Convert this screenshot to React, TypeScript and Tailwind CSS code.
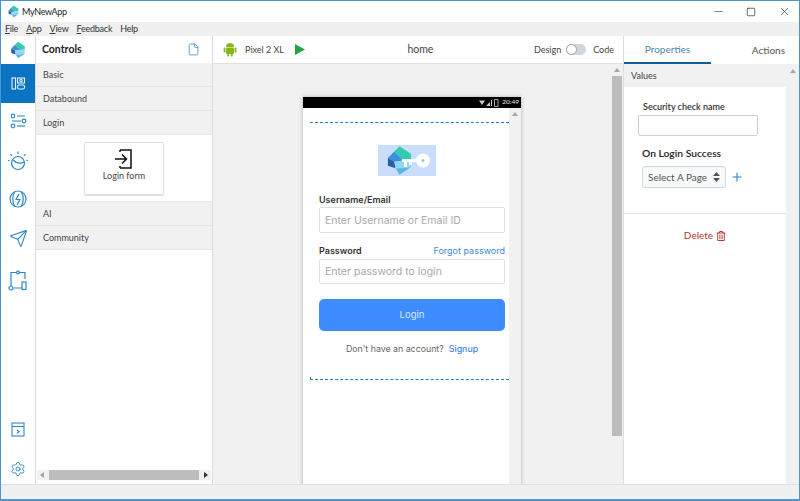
import { File, Minus, Plus, Send, Settings, Square, X } from "lucide-react";
import { FaRegTrashAlt } from "react-icons/fa";

const Logo = ({ size }: { size: number }) => (
  <svg width={size} height={size} viewBox="0 0 24 24">
    <polygon points="12,1 21,7 21,11 15,12 8,5" fill="#35c9b0" />
    <polygon points="8,5 15,12 8,13 3,10" fill="#3a8fe0" />
    <polygon points="3,10 8,13 9,18 3,16" fill="#2a5fa8" />
    <polygon points="8,13 15,12 21,11 21,17 14,18 9,18" fill="#8fd8f0" />
    <polygon points="9,18 14,18 21,17 12,23" fill="#5cb4ec" />
  </svg>
);

const RailIcon = ({ children }: { children: React.ReactNode }) => (
  <svg width="22" height="22" viewBox="0 0 22 22" fill="none" stroke="#2f86c6" strokeWidth="1.2">
    {children}
  </svg>
);

const AccordionRow = ({ label }: { label: string }) => (
  <div className="h-6 pt-[1px] flex items-center pl-[7px] bg-[#f1f1f1] border-b border-[#e6e6e6] text-[9px] text-[#444]">
    {label}
  </div>
);

const ArrowButton = ({ dir }: { dir: "up" | "left" | "right" }) => (
  <span
    className={
      dir === "up"
        ? "block w-0 h-0 border-x-[3px] border-x-transparent border-b-[4px] border-b-[#a6a6a6]"
        : dir === "left"
          ? "block w-0 h-0 border-y-[3px] border-y-transparent border-r-[4px] border-r-[#a6a6a6]"
          : "block w-0 h-0 border-y-[3px] border-y-transparent border-l-[4px] border-l-[#333]"
    }
  />
);

const AndroidIcon = () => (
  <svg width="14" height="15" viewBox="0 0 14 15" fill="#8bb51d">
    <path d="M3 5a4 4 0 0 1 8 0z" />
    <rect x="3" y="5.6" width="8" height="6.4" rx="1" />
    <rect x="0.6" y="5.6" width="1.8" height="5" rx="0.9" />
    <rect x="11.6" y="5.6" width="1.8" height="5" rx="0.9" />
    <rect x="4.4" y="11" width="1.8" height="3.6" rx="0.9" />
    <rect x="7.8" y="11" width="1.8" height="3.6" rx="0.9" />
  </svg>
);

const Rail = () => (
  <div className="w-[35px] shrink-0 bg-white border-r border-[#dcdcdc] flex flex-col items-center">
    <div className="h-7 w-full flex items-center justify-center">
      <Logo size={18} />
    </div>
    <div className="h-[39px] w-full bg-[#0a74c2] flex items-center justify-center">
      <svg width="15" height="15" viewBox="0 0 15 15" fill="none" stroke="#ffffff" strokeWidth="1.1" opacity="0.9">
        <rect x="1" y="2" width="3.5" height="11" />
        <rect x="6.5" y="2" width="7" height="5" />
        <circle cx="10" cy="4.5" r="1.2" />
        <rect x="6.5" y="9" width="7" height="4" rx="1.5" />
      </svg>
    </div>
    <div className="mt-[7px] flex flex-col items-center">
      <RailIcon>
        <circle cx="6" cy="6" r="1.8" />
        <path d="M10 6h8M5 11h9" />
        <circle cx="17" cy="11" r="1.8" />
        <circle cx="6" cy="16" r="1.8" />
        <path d="M10 16h8" />
      </RailIcon>
      <div className="mt-[18px]">
        <RailIcon>
          <circle cx="11" cy="13" r="6.5" />
          <path d="M6 10c3 3 7 4 11 2M11 4V1.5M5 6 3.5 4M17 6l1.5-2M2.5 10.5H1M19.5 10.5H21" />
        </RailIcon>
      </div>
      <div className="mt-[16px]">
        <RailIcon>
          <circle cx="11" cy="11" r="8" />
          <path d="M8 3.5c-3 4-3 11 0 15M14 3.5c3 4 3 11 0 15M12 6l-3 5.5h4L10 17" />
        </RailIcon>
      </div>
      <Send className="mt-[19px]" size={19} color="#2f86c6" strokeWidth={1.4} />
      <div className="mt-[21px]">
        <RailIcon>
          <path d="M4 11V3.5h14V10M7 19h8" />
          <circle cx="11" cy="3.5" r="1.4" fill="#fff" />
          <circle cx="4" cy="19" r="2" />
          <rect x="15" y="13" width="4" height="7.5" />
          <path d="M4 11v6" />
        </RailIcon>
      </div>
    </div>
    <div className="mt-auto flex flex-col items-center">
      <svg width="14" height="15" viewBox="0 0 14 15" fill="none" stroke="#2f86c6" strokeWidth="1.1">
        <rect x="1" y="1" width="12" height="13" />
        <path d="M1 4.5h12M6 8l2 1.8L6 11.5" />
      </svg>
      <div className="mt-[24px] mb-[7px]">
        <Settings size={16} color="#2f86c6" strokeWidth={1.4} />
      </div>
    </div>
  </div>
);

const ControlsPanel = () => (
  <div className="w-[177px] shrink-0 bg-white border-r border-[#dcdcdc] flex flex-col">
    <div className="h-[27px] flex items-center justify-between pl-[6px] pr-[12px]">
      <span className="text-[10.5px] font-bold text-[#222]">Controls</span>
      <File size={13} color="#2f86c6" strokeWidth={1.4} />
    </div>
    <AccordionRow label="Basic" />
    <AccordionRow label="Databound" />
    <AccordionRow label="Login" />
    <div className="h-[67px] flex justify-center pt-[7px] border-b border-[#e6e6e6]">
      <div className="w-[80px] h-[53px] border border-[#dedede] rounded-[2px] shadow-[0_1px_1px_#ddd] flex flex-col items-center pt-[6px]">
        <svg width="18" height="20" viewBox="0 0 18 20" fill="none" stroke="#111" strokeWidth="1.5">
          <path d="M5 1h11v18H5M5 1v2M5 19v-2M0 10h11M7 5.5 11.5 10 7 14.5" />
        </svg>
        <span className="text-[9px] text-[#444]">Login form</span>
      </div>
    </div>
    <AccordionRow label="AI" />
    <AccordionRow label="Community" />
    <div className="mt-auto mb-[4px] h-[10px] mx-[1px] bg-[#f1f1f1] flex items-center justify-between px-[3px]">
      <ArrowButton dir="left" />
      <div className="h-full w-[150px] bg-[#bdbdbd]" />
      <ArrowButton dir="right" />
    </div>
  </div>
);

const Toolbar = () => (
  <div className="h-7 shrink-0 bg-white border-b border-[#e0e0e0] flex items-center pl-[10px] pr-[9px] text-[#444]">
    <AndroidIcon />
    <span className="ml-[8px] text-[9px]">Pixel 2 XL</span>
    <svg className="ml-[11px]" width="10" height="11" viewBox="0 0 10 11">
      <polygon points="0,0 10,5.5 0,11" fill="#27a146" />
    </svg>
    <span className="flex-1 text-center text-[10.5px] pl-[62px]">home</span>
    <span className="ml-[60px] text-[9px]">Design</span>
    <div className="mx-[5px] w-5 h-[11px] rounded-full bg-[#cfd6dc] relative">
      <span className="absolute left-0 top-0 w-[11px] h-[11px] rounded-full bg-white border border-[#9aa3aa]" />
    </div>
    <span className="ml-[2px] text-[9px]">Code</span>
  </div>
);

const StatusBar = () => (
  <div className="h-[11px] bg-black flex items-center justify-end pr-[2px] gap-[3px]">
    <svg width="20" height="8" viewBox="0 0 20 8" fill="#cccccc">
      <path d="M0 1.5h6L3 6z" />
      <path d="M7 7 11 3v4zM12 1h1v6h-1z" />
      <path d="M15.5 0.5h3.5v7h-3.5z" fill="none" stroke="#cccccc" strokeWidth="0.8" />
    </svg>
    <span className="text-[6.5px] font-semibold text-[#dddddd] leading-none">20:49</span>
  </div>
);

const PhoneForm = () => (
  <div
    className="flex-1 min-w-0 pl-[7px] flex flex-col"
    style={{ fontFamily: "Inter, sans-serif" }}
  >
    <div className="mt-[14px] border-t border-dashed border-[#1e7fc0]" />
    <div className="mt-[22px] ml-[68px] w-[58px] h-[31px] bg-[#c9defc] relative">
      <div className="absolute left-[6px] top-0">
        <Logo size={31} />
      </div>
      <svg className="absolute left-[24px] top-[8px]" width="30" height="16" viewBox="0 0 30 16" fill="#ffffff">
        <circle cx="21" cy="7.5" r="7" />
        <rect x="0" y="6" width="16" height="3" />
        <rect x="2" y="7" width="3" height="7" />
        <rect x="7" y="7" width="3" height="5" />
        <circle cx="21" cy="7.5" r="1.5" fill="#9dc0ee" />
      </svg>
    </div>
    <div className="pl-[9px] pr-[4px] flex flex-col">
      <span className="mt-[17px] text-[9px] font-semibold text-[#333] leading-[14px]">Username/Email</span>
      <div className="h-[26px] pt-[1px] border border-[#dcdfe3] rounded-[2px] flex items-center pl-[5px] text-[10.5px] text-[#a9a9a9]">
        Enter Username or Email ID
      </div>
      <div className="mt-[11px] flex items-center justify-between leading-[14px]">
        <span className="text-[9px] font-semibold text-[#333]">Password</span>
        <span className="text-[9px] text-[#4488e0]">Forgot password</span>
      </div>
      <div className="mt-[1px] h-[25px] pt-[1px] border border-[#dcdfe3] rounded-[2px] flex items-center pl-[5px] text-[10.5px] text-[#a9a9a9]">
        Enter password to login
      </div>
      <div className="mt-[15px] h-[32px] bg-[#3f8cff] rounded-[5px] flex items-center justify-center text-[9.5px] text-[#dbe9ff]">
        Login
      </div>
      <div className="mt-[11px] text-center text-[8.8px] leading-[14px] text-[#666]">
        Don't have an account?<span className="ml-[5px] font-medium text-[#4488e0]">Signup</span>
      </div>
    </div>
    <div className="mt-[23px] relative border-t border-dashed border-[#1e7fc0]">
      <span className="absolute left-0 top-[-3px] h-[3px] border-l border-[#1e7fc0]" />
    </div>
  </div>
);

const Canvas = () => (
  <div className="flex-1 min-h-0 bg-[#f1f1f1] flex">
    <div className="flex-1 min-w-0 pt-[33px] pl-[90px] overflow-hidden flex">
      <div className="w-[218px] h-[600px] bg-white shadow-[0_0_4px_#aaa] flex flex-col">
        <StatusBar />
        <div className="flex flex-1">
          <PhoneForm />
          <div className="w-[12px] bg-[#f1f1f1] flex justify-center pt-[4px]">
            <div>
              <ArrowButton dir="up" />
            </div>
          </div>
        </div>
      </div>
    </div>
    <div className="w-[11px] mr-[1px] bg-[#f1f1f1] flex flex-col items-center pt-[4px]">
      <ArrowButton dir="up" />
      <div className="mt-[4px] w-[10px] h-[360px] bg-[#bdbdbd]" />
    </div>
  </div>
);

const PropertiesPanel = () => (
  <div className="w-[176px] shrink-0 bg-white border-l border-[#dcdcdc] flex flex-col">
    <div className="h-7 shrink-0 flex items-stretch text-[10px]">
      <div className="w-[87px] pt-[1px] flex items-center justify-center text-[#4d87b5] border-b-2 border-[#0f5c97]">
        Properties
      </div>
      <div className="flex-1 pt-[1px] flex items-center justify-end pr-[14px] text-[#555]">Actions</div>
    </div>
    <div className="flex flex-1 min-h-0">
      <div className="flex-1 min-w-0 flex flex-col">
        <div className="h-[23px] bg-[#f1f1f1] flex items-center pl-[7px] text-[9px] text-[#444]">Values</div>
        <div className="pt-[13px] h-[127px] border-b border-[#e3e3e3] flex flex-col">
          <span className="ml-[19px] text-[9px] font-semibold text-[#333] leading-[14px]">Security check name</span>
          <div className="ml-[14px] mt-[1px] w-[120px] h-[21px] border border-[#cfcfcf] rounded-[2px]" />
          <span className="ml-[18px] mt-[10px] text-[10.3px] font-semibold text-[#222] leading-[14px]">On Login Success</span>
          <div className="ml-[18px] mt-[6px] flex items-center">
            <div className="w-[84px] h-[22px] bg-[#f8f9fa] border border-[#ced4da] rounded-[3px] flex items-center pl-[5px] text-[10px] text-[#555]">
              Select A Page
              <svg className="ml-[6px]" width="7" height="10" viewBox="0 0 7 10" fill="#555">
                <polygon points="3.5,0 7,4 0,4" />
                <polygon points="0,6 7,6 3.5,10" />
              </svg>
            </div>
            <Plus className="ml-[4px]" size={14} color="#2583c9" strokeWidth={1.8} />
          </div>
        </div>
        <div className="mt-[14px] flex items-center justify-center text-[10px] text-[#b53535]">
          Delete
          <FaRegTrashAlt className="ml-[3px]" size={10} />
        </div>
      </div>
      <div className="w-[13px] bg-[#f1f1f1] flex justify-center pt-[5px]">
        <div>
          <ArrowButton dir="up" />
        </div>
      </div>
    </div>
  </div>
);

export default function App() {
  return (
    <div
      className="w-[800px] h-[501px] flex flex-col overflow-hidden bg-white border-x border-t border-[#4a95cf] border-b-2"
      style={{ fontFamily: 'Lato, "Open Sans", sans-serif' }}
    >
      <div className="h-[21px] shrink-0 flex items-center pl-[6px]">
        <Logo size={13} />
        <span className="ml-[2px] text-[9px] tracking-[-0.3px] text-[#222]">MyNewApp</span>
        <div className="ml-auto flex items-center">
          <Minus size={13} color="#444" strokeWidth={1.2} className="mr-[21px]" />
          <Square size={10} color="#222" strokeWidth={1.6} className="mr-[22px]" />
          <X size={13} color="#333" strokeWidth={1.2} className="mr-[8px]" />
        </div>
      </div>
      <div className="h-[14px] shrink-0 bg-[#f0f0f0] flex items-center pl-[4px] gap-[8px] text-[9px] tracking-[-0.25px] text-[#333]">
        <span><u>F</u>ile</span>
        <span><u>A</u>pp</span>
        <span><u>V</u>iew</span>
        <span><u>F</u>eedback</span>
        <span>Help</span>
      </div>
      <div className="flex-1 min-h-0 flex">
        <Rail />
        <ControlsPanel />
        <div className="flex-1 min-w-0 flex flex-col">
          <Toolbar />
          <Canvas />
        </div>
        <PropertiesPanel />
      </div>
      <div className="h-[15px] shrink-0 bg-[#f0f0f0] border-t border-[#e0e0e0]" />
    </div>
  );
}
